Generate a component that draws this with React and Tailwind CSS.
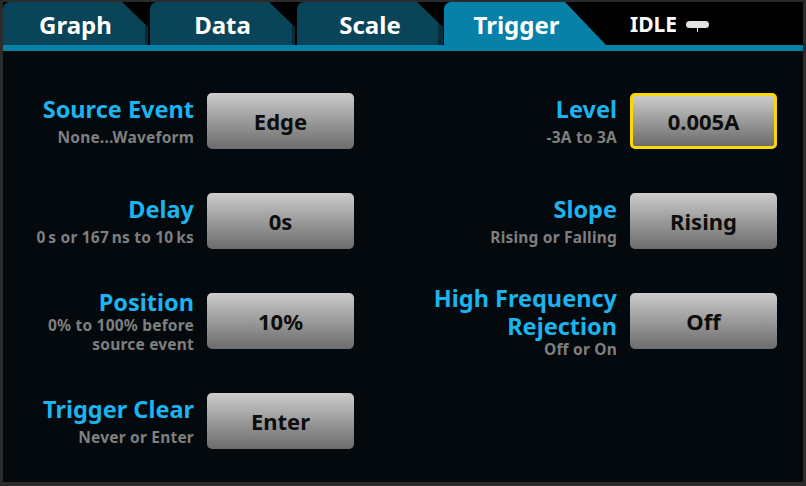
import React from 'react';

const tabs = [
  { label: 'Graph', cls: 'w-[145px] mr-[2px] bg-[linear-gradient(to_right,#0a4459_142px,#062d3b_142px)] [clip-path:polygon(0_0,119px_0,145px_25px,145px_100%,0_100%)]' },
  { label: 'Data', cls: 'w-[145px] mr-[2px] bg-[linear-gradient(to_right,#0a4459_142px,#062d3b_142px)] [clip-path:polygon(0_0,119px_0,145px_25px,145px_100%,0_100%)]' },
  { label: 'Scale', cls: 'w-[146px] mr-[1px] bg-[linear-gradient(to_right,#0a4459_141px,#062d3b_141px)] [clip-path:polygon(0_0,120px_0,146px_25px,146px_100%,0_100%)]' },
  { label: 'Trigger', cls: 'w-[162px] pr-[17px] bg-[#0781a8] [clip-path:polygon(0_0,121px_0,162px_100%,0_100%)]' },
];

const leftRows = [
  { title: ['Source Event'], sub: ['None...Waveform'], value: 'Edge' },
  { title: ['Delay'], sub: ['0\u2009s or 167\u2009ns to 10\u2009ks'], value: '0s' },
  { title: ['Position'], sub: ['0% to 100% before', 'source event'], value: '10%', tight: true },
  { title: ['Trigger Clear'], sub: ['Never or Enter'], value: 'Enter' },
];

const rightRows = [
  { title: ['Level'], sub: ['-3A to 3A'], value: '0.005A', focus: true },
  { title: ['Slope'], sub: ['Rising or Falling'], value: 'Rising' },
  { title: ['High Frequency', 'Rejection'], sub: ['Off or On'], value: 'Off', tight: true },
];

const font = { fontFamily: '"Noto Sans", "Open Sans", sans-serif' };

const Row = ({ row }) => (
  <div className="flex items-center justify-end gap-[13px] h-[56px]">
    <div className="text-right whitespace-nowrap">
      {row.title.map((t, i) => (
        <div key={i} className="text-[23.5px] leading-[28px] font-bold text-[#1cb4ee]">{t}</div>
      ))}
      <div className={row.tight ? 'mt-0' : 'mt-[5px]'}>
        {row.sub.map((s, i) => (
          <div key={i} className="text-[15.5px] leading-[19px] font-bold text-[#7f7f7f] tracking-[0.2px]">{s}</div>
        ))}
      </div>
    </div>
    <div
      className={`w-[147px] h-[56px] shrink-0 rounded-[5px] bg-linear-to-b from-[#cccccc] to-[#6c6c6c] flex items-center justify-center text-[22px] font-bold text-[#0d0d0d] ${row.focus ? 'border-[3px] border-[#ffd700]' : ''}`}
    >
      {row.value}
    </div>
  </div>
);

export default function App() {
  return (
    <div className="w-[806px] h-[486px] bg-[#2b2b2b] pt-[2px] px-[3px] pb-[4px]" style={font}>
      <div className="h-full flex flex-col bg-[#03090d]">
        {/* tab bar */}
        <div className="h-[43px] bg-black flex items-stretch shrink-0">
          {tabs.map(tab => (
            <div
              key={tab.label}
              className={`rounded-tl-[7px] flex items-center justify-center pt-[2px] text-white text-[24px] font-bold ${tab.cls}`}
            >
              {tab.label}
            </div>
          ))}
          <div className="flex items-center ml-[24px] pt-[2px]">
            <span className="text-white text-[21px] font-bold">IDLE</span>
            <div className="relative ml-[9px] w-[23px] h-[7px] rounded-full bg-[#e2e2e2]">
              <div className="absolute left-[11px] top-[7px] w-[1px] h-[4px] bg-[#e2e2e2]"></div>
            </div>
          </div>
        </div>
        <div className="h-[6px] bg-[#0781a8] shrink-0"></div>

        {/* settings */}
        <div className="flex-1 flex pt-[42px]">
          <div className="w-[351px] flex flex-col gap-[44px]">
            {leftRows.map(r => <Row key={r.value} row={r} />)}
          </div>
          <div className="w-[423px] flex flex-col gap-[44px]">
            {rightRows.map(r => <Row key={r.value} row={r} />)}
          </div>
        </div>
      </div>
    </div>
  );
}
